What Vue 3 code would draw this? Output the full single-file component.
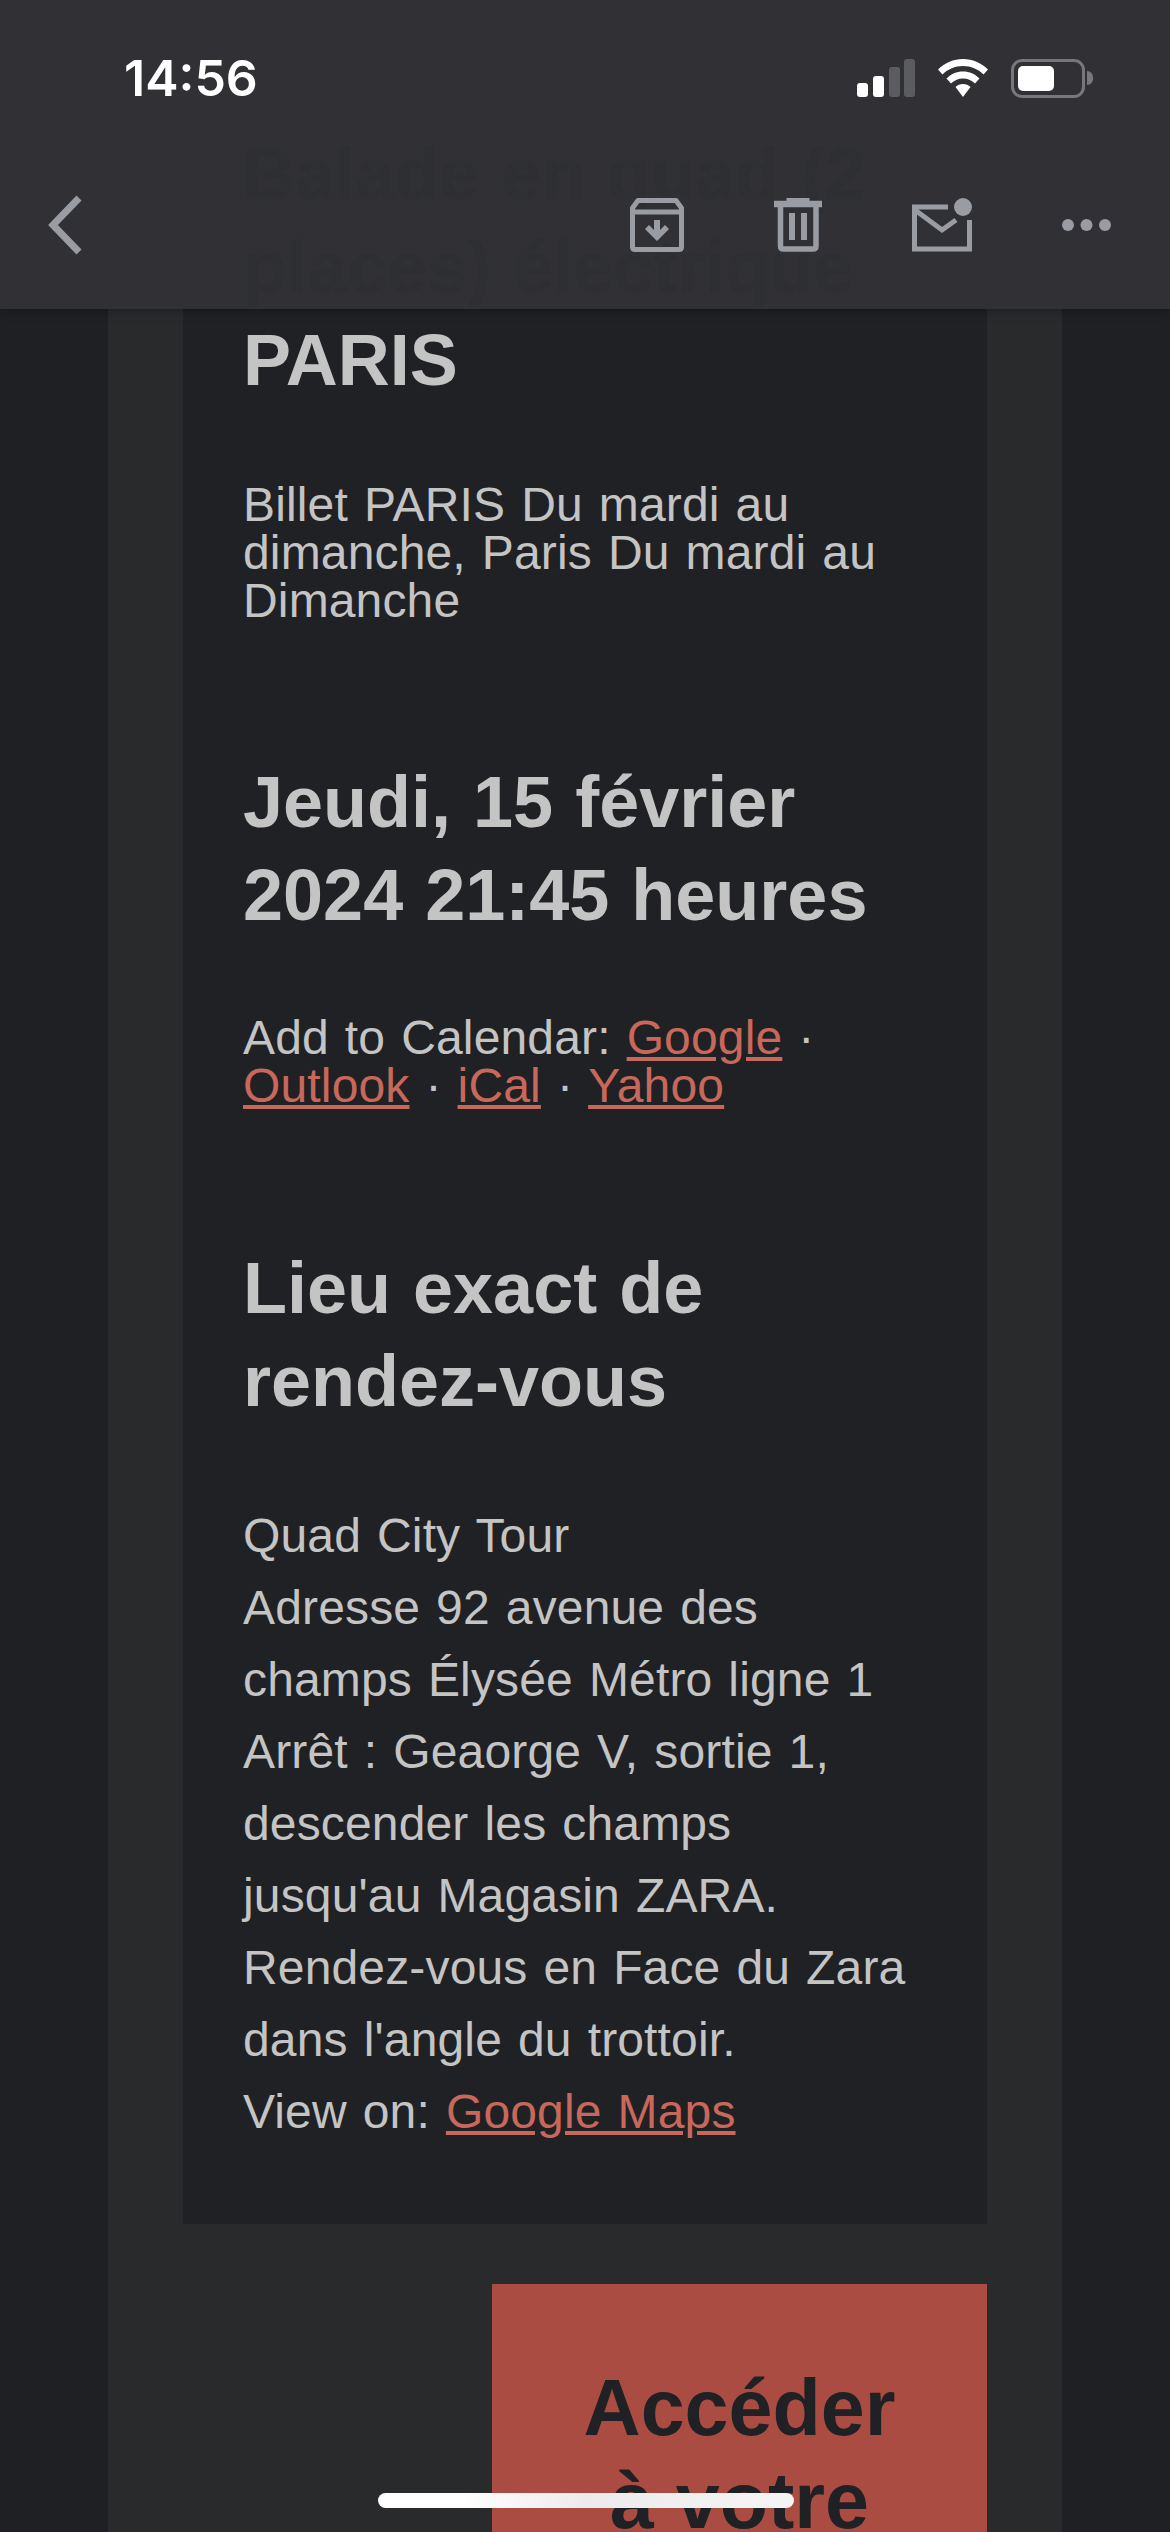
<template>
  <div class="phone">
    <header class="topbar">
      <div class="status">
        <span class="time">14:56</span>
        <div class="status-icons">
          <svg class="signal" width="58" height="38" viewBox="0 0 58 38">
            <rect x="0" y="24" width="11" height="14" rx="3" fill="#fff" />
            <rect x="16" y="17" width="11" height="21" rx="3" fill="#fff" />
            <rect x="32" y="8" width="11" height="30" rx="3" fill="#5b5c5f" />
            <rect x="47" y="0" width="11" height="38" rx="3" fill="#5b5c5f" />
          </svg>
          <svg class="wifi" width="50" height="38" viewBox="0 0 50 38">
            <path d="M25 0C15.500 0 7 3.700 0 10.500L4.500 15.500C10 10 17 7 25 7S40 10 45.500 15.500L50 10.500C43 3.700 34.500 0 25 0Z" fill="#fff" />
            <path d="M25 12.500C18.500 12.500 13 15 8.500 19.500L13 24.500C16 21.500 20 19.500 25 19.500S34 21.500 37 24.500L41.500 19.500C37 15 31.500 12.500 25 12.500Z" fill="#fff" />
            <path d="M25 25C22 25 19.500 26 17.500 28L25 38L32.500 28C30.500 26 28 25 25 25Z" fill="#fff" />
          </svg>
          <div class="battery"><div class="battery-fill"></div></div>
        </div>
      </div>
      <div class="toolbar">
        <svg class="back" width="34" height="60" viewBox="0 0 34 60">
          <path d="M31 3L5 30L31 57" fill="none" stroke="#9a9ca3" stroke-width="7" />
        </svg>
        <svg width="54" height="54" viewBox="0 0 54 54" fill="none" stroke="#9a9ca3">
          <path d="M2.500 10L8 2.500H46L51.500 10V49Q51.500 51.500 49 51.500H5Q2.500 51.500 2.500 49Z" stroke-width="5" stroke-linejoin="round" />
          <path d="M3 14H51" stroke-width="5" />
          <path d="M15 31L19 27L24 32V22H30V32L35 27L39 31L27 43Z" fill="#9a9ca3" stroke="none" />
        </svg>
        <svg width="48" height="54" viewBox="0 0 48 54" fill="none" stroke="#9a9ca3">
          <path d="M0 6H48" stroke-width="6.500" />
          <path d="M14 3V1.500H34V3" stroke-width="3" />
          <path d="M6.500 8V48Q6.500 51 9.500 51H39Q42 51 42 48V8" stroke-width="5.500" />
          <path d="M18 15V42M30 15V42" stroke-width="6" />
        </svg>
        <svg width="60" height="54" viewBox="0 0 60 54" fill="none" stroke="#9a9ca3">
          <path d="M36 9H2.500V51H57.500V22" stroke-width="5" />
          <path d="M3 12L30 32L44 22" stroke-width="5" />
          <circle cx="51" cy="9" r="9" fill="#9a9ca3" stroke="none" />
        </svg>
        <svg width="49" height="12" viewBox="0 0 49 12" fill="#9a9ca3">
          <circle cx="6" cy="6" r="6" />
          <circle cx="24.500" cy="6" r="6" />
          <circle cx="43" cy="6" r="6" />
        </svg>
      </div>
    </header>

    <main class="band">
      <section class="card">
        <h1 class="heading title">
          <span class="under-bar">Balade en quad (2 places) électrique</span>
          PARIS
        </h1>
        <p class="tight intro">Billet PARIS Du mardi au dimanche, Paris Du mardi au Dimanche</p>

        <h2 class="heading date">Jeudi, 15 février 2024 21:45 heures</h2>
        <p class="tight calendar">
          Add to Calendar: <a href="#">Google</a> ·
          <a href="#">Outlook</a> · <a href="#">iCal</a> · <a href="#">Yahoo</a>
        </p>

        <h2 class="heading place">Lieu exact de rendez-vous</h2>
        <p class="address">
          Quad City Tour<br />
          Adresse 92 avenue des champs Élysée Métro ligne 1 Arrêt : Geaorge V, sortie 1, descender les champs jusqu'au Magasin ZARA. Rendez-vous en Face du Zara dans l'angle du trottoir.<br />
          View on: <a href="#">Google Maps</a>
        </p>
      </section>

      <div class="actions">
        <a class="cta" href="#">Accéder à votre billet</a>
      </div>
    </main>

    <div class="home-indicator"></div>
  </div>
</template>

<script setup>
</script>

<style>
html,
body {
  margin: 0;
  background: #1f2024;
}
</style>

<style scoped>
.phone {
  position: relative;
  width: 1170px;
  height: 2532px;
  overflow: hidden;
  background: #1f2024;
  font-family: "Liberation Sans", Arial, sans-serif;
  color: #c4c4c4;
}

.topbar {
  position: absolute;
  top: 0;
  left: 0;
  right: 0;
  height: 309px;
  background: #303035;
  box-shadow: 0 1px 10px rgba(0, 0, 0, 0.35);
}

.status {
  display: flex;
  align-items: center;
  justify-content: space-between;
  height: 156px;
  padding: 0 85px 0 124px;
}

.time {
  font-family: Inter, "Liberation Sans", sans-serif;
  font-size: 50px;
  font-weight: 600;
  color: #fff;
}

.status-icons {
  display: flex;
  align-items: center;
  gap: 23px;
}

.battery {
  position: relative;
  box-sizing: border-box;
  width: 74px;
  height: 39px;
  padding: 4px;
  border: 3px solid #77787a;
  border-radius: 11px;
}

.battery::after {
  content: "";
  position: absolute;
  right: -11px;
  top: 9px;
  width: 6px;
  height: 14px;
  border-radius: 0 6px 6px 0;
  background: #77787a;
}

.battery-fill {
  width: 36px;
  height: 100%;
  border-radius: 5px;
  background: #fff;
}

.toolbar {
  position: relative;
  z-index: 3;
  display: flex;
  align-items: center;
  gap: 90px;
  height: 138px;
  padding: 0 59px 0 48px;
}

.back {
  margin-right: auto;
}

.band {
  width: 954px;
  margin: 0 auto;
  background: #292a2c;
}

.card {
  box-sizing: border-box;
  width: 804px;
  margin: 0 auto;
  padding: 128px 70px 76px 60px;
  background: #202125;
}

.heading {
  margin: 0;
  font-size: 72px;
  font-weight: 700;
  line-height: 93px;
  word-spacing: 2px;
}

.under-bar {
  position: relative;
  z-index: 2;
  color: #2e2f33;
}

.tight,
.address {
  margin: 0;
  font-size: 48px;
  letter-spacing: 0.15px;
  word-spacing: 2.5px;
}

.tight {
  line-height: 48px;
}

.intro {
  margin-top: 74px;
}

.date {
  margin-top: 131px;
}

.calendar {
  margin-top: 72px;
}

.place {
  margin-top: 132px;
}

.address {
  margin-top: 72px;
  line-height: 72px;
}

.card a {
  color: #c8685a;
}

.actions {
  display: flex;
  justify-content: flex-end;
  width: 804px;
  margin: 0 auto;
  padding-top: 60px;
}

.cta {
  box-sizing: border-box;
  width: 495px;
  padding: 77px 85px;
  font-size: 79px;
  font-weight: 700;
  line-height: 93px;
  text-align: center;
  text-decoration: none;
  color: #202125;
  background: #ab4c43;
}

.home-indicator {
  position: absolute;
  left: 378px;
  bottom: 24px;
  z-index: 3;
  width: 416px;
  height: 15px;
  border-radius: 8px;
  background: linear-gradient(90deg, #fff 20%, #ebebeb 50%, #f5f5f5 100%);
}
</style>
